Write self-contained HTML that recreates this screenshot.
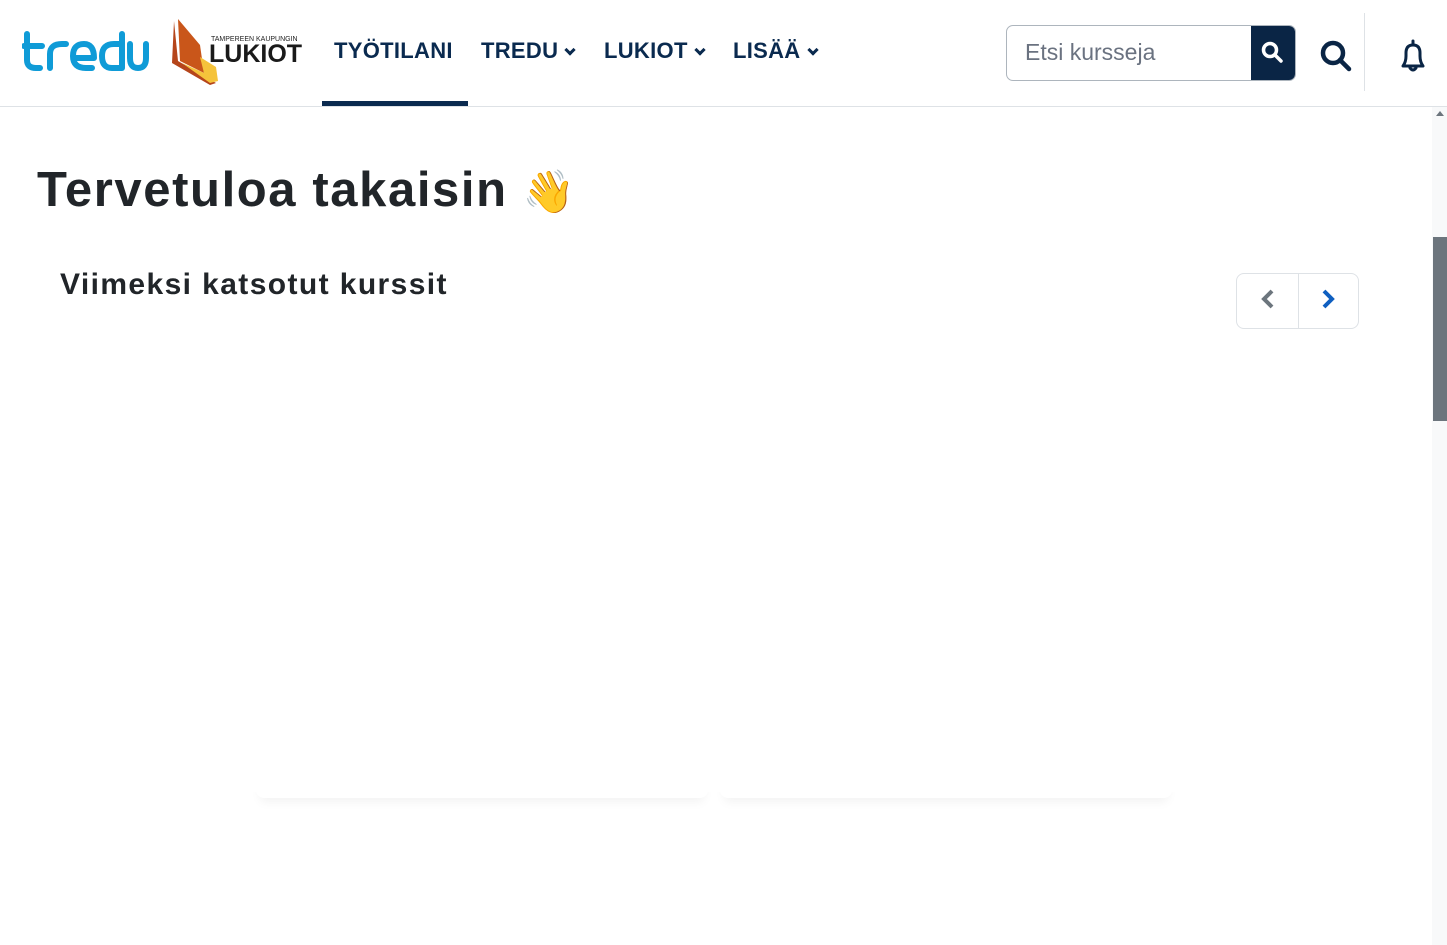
<!DOCTYPE html>
<html><head><meta charset="utf-8"><style>
*{box-sizing:border-box;margin:0;padding:0}
body{width:1447px;height:945px;overflow:hidden;background:#fff;font-family:"Liberation Sans",sans-serif;position:relative}
.hdr{position:absolute;left:0;top:0;width:1447px;height:107px;border-bottom:1px solid #dee2e6;background:#fff}
.nav{position:absolute;top:38px;font-weight:bold;font-size:22px;color:#0a2a4f;letter-spacing:0.3px}
.chev{display:inline-block;width:8px;height:8px;border-right:3px solid #0a2a4f;border-bottom:3px solid #0a2a4f;transform:rotate(45deg);margin-left:8px;position:relative;top:-4px}
.sb{position:absolute;left:1432px;top:107px;width:15px;height:838px;background:#f8f9fa}
.thumb{position:absolute;left:1433px;top:237px;width:14px;height:184px;background:#6c757d}
</style></head><body>
<div class="hdr">
 <svg style="position:absolute;left:22px;top:30px" width="128" height="44" viewBox="0 0 128 44">
  <g fill="none" stroke="#0f9bd7" stroke-width="6" stroke-linecap="round" stroke-linejoin="round">
   <path d="M5 4 V30 Q5 38 14 38 H18"/><path d="M2 16 H20"/>
   <path d="M28 38 V24 Q28 14 40 14 H44"/>
   <path d="M52 28 H72 Q72 14 62 14 Q51 14 51 26 Q51 38 64 38 H70"/>
   <path d="M100 4 V38 H90 Q80 38 80 26 Q80 14 92 14 H100"/>
   <path d="M108 14 V28 Q108 38 116 38 Q124 38 124 28 V14"/>
  </g>
 </svg>
 <svg style="position:absolute;left:170px;top:17px" width="52" height="70" viewBox="0 0 52 70">
  <path d="M8 2 L30 28 L34 56 L10 44 Z" fill="#c9561a"/>
  <path d="M4 4 L2 46 L40 68 L46 66 L8 44 Z" fill="#b5451b"/>
  <path d="M12 46 L34 56 L30 40 L46 50 L48 64 L40 66 Z" fill="#f5c33b"/>
 </svg>
 <div style="position:absolute;left:211px;top:36px;font-size:7px;color:#222">TAMPEREEN KAUPUNGIN</div>
 <div style="position:absolute;left:209px;top:40px;font-size:25px;font-weight:bold;color:#1a1a1a">LUKIOT</div>
 <div class="nav" style="left:334px">TYÖTILANI</div>
 <div style="position:absolute;left:322px;top:101px;width:146px;height:5px;background:#0a2a4f"></div>
 <div class="nav" style="left:481px">TREDU<span class="chev"></span></div>
 <div class="nav" style="left:604px">LUKIOT<span class="chev"></span></div>
 <div class="nav" style="left:733px">LISÄÄ<span class="chev"></span></div>
 <div style="position:absolute;left:1006px;top:25px;width:290px;height:56px;border:1px solid #adb5bd;border-radius:7px;overflow:hidden">
  <div style="position:absolute;left:18px;top:13px;font-size:23px;color:#6a7280">Etsi kursseja</div>
  <div style="position:absolute;right:0;top:0;width:44px;height:56px;background:#0a2545"></div>
  <svg style="position:absolute;right:9px;top:14px" width="26" height="26" viewBox="0 0 26 26"><circle cx="10" cy="10" r="6.5" fill="none" stroke="#fff" stroke-width="3.5"/><path d="M15 15 L21 21" stroke="#fff" stroke-width="3.5" stroke-linecap="round"/></svg>
 </div>
 <svg style="position:absolute;left:1318px;top:38px" width="36" height="36" viewBox="0 0 36 36"><circle cx="15" cy="15" r="10" fill="none" stroke="#0a2545" stroke-width="4.5"/><path d="M22 22 L31 31" stroke="#0a2545" stroke-width="4.5" stroke-linecap="round"/></svg>
 <div style="position:absolute;left:1364px;top:13px;width:1px;height:78px;background:#dee2e6"></div>
 <svg style="position:absolute;left:1395px;top:38px" width="36" height="36" viewBox="0 0 36 36"><path d="M18 3 V6 M8 28 Q11 24 11 18 V15 Q11 7 18 7 Q25 7 25 15 V18 Q25 24 28 28 Z M15 30 Q18 34 21 30" fill="none" stroke="#0a2545" stroke-width="3" stroke-linejoin="round" stroke-linecap="round"/></svg>
</div>
<div style="position:absolute;left:37px;top:162px;font-size:49px;font-weight:bold;color:#212529;letter-spacing:1.6px">Tervetuloa takaisin <span style="font-size:42px;font-family:'DejaVu Sans',sans-serif">👋</span></div>
<div style="position:absolute;left:60px;top:268px;font-size:30px;font-weight:bold;color:#212529;letter-spacing:1.4px">Viimeksi katsotut kurssit</div>
<div style="position:absolute;left:1236px;top:273px;width:123px;height:56px;border:1px solid #dee2e6;border-radius:8px">
 <div style="position:absolute;left:61px;top:0;width:1px;height:55px;background:#dee2e6"></div>
 <svg style="position:absolute;left:22px;top:13px" width="18" height="26" viewBox="0 0 18 26"><path d="M13 4 L5 12 L13 20" fill="none" stroke="#6c757d" stroke-width="4"/></svg>
 <svg style="position:absolute;left:82px;top:13px" width="18" height="26" viewBox="0 0 18 26"><path d="M5 4 L13 12 L5 20" fill="none" stroke="#0f5fc0" stroke-width="4"/></svg>
</div>
<div style="position:absolute;left:256px;top:680px;width:452px;height:118px;border-radius:8px;box-shadow:0 8px 10px -4px rgba(0,0,0,0.05)"></div>
<div style="position:absolute;left:720px;top:680px;width:452px;height:118px;border-radius:8px;box-shadow:0 8px 10px -4px rgba(0,0,0,0.05)"></div>
<div style="position:absolute;left:240px;top:600px;width:960px;height:192px;background:#fff"></div>
<div class="sb"></div><div class="thumb"></div>
<div style="position:absolute;left:1436px;top:111px;width:0;height:0;border-left:4px solid transparent;border-right:4px solid transparent;border-bottom:5px solid #6c757d"></div>
</body></html>
